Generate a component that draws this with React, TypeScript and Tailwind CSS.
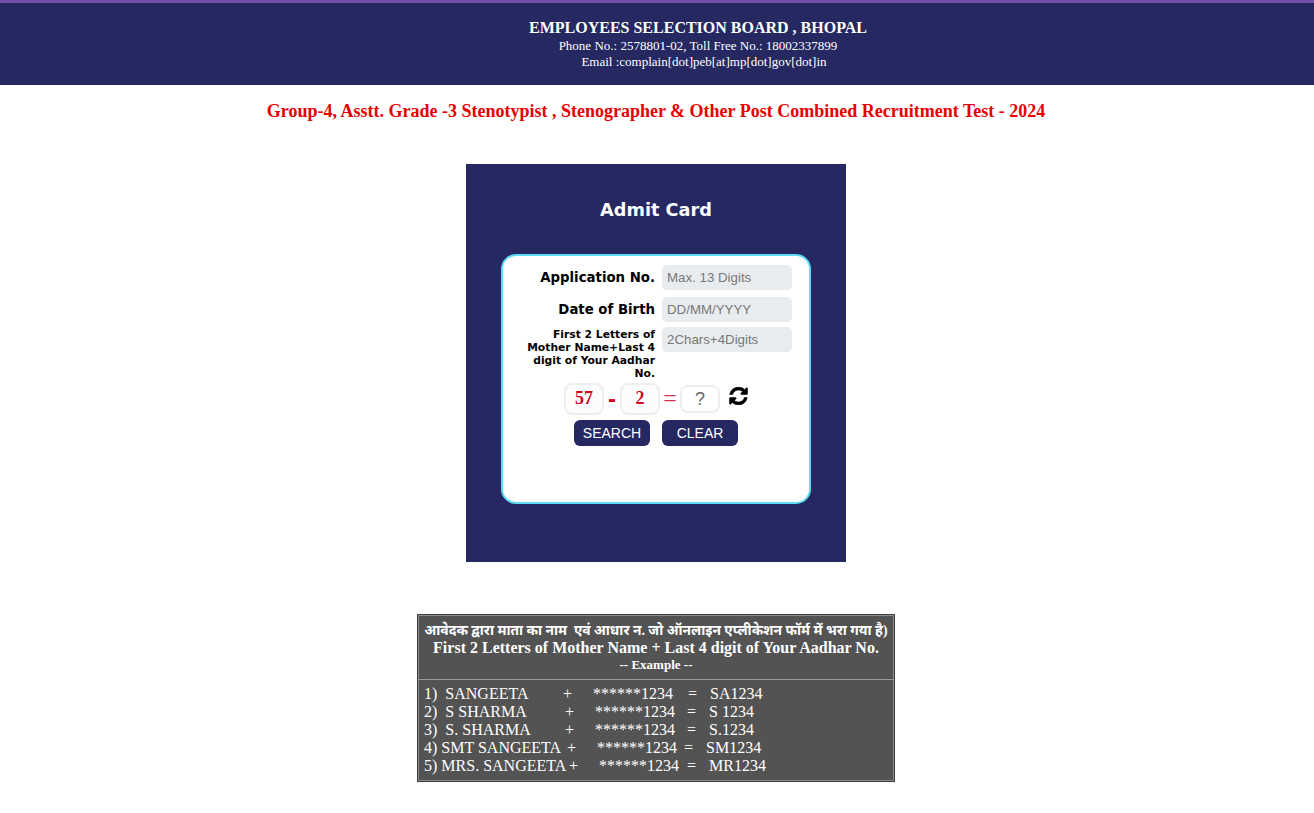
const serif = "font-['Liberation_Serif','Noto_Sans_Devanagari','Noto_Sans',serif]";
const verdana = "font-['DejaVu_Sans',sans-serif]";
const arial = "font-['Liberation_Sans',sans-serif]";

const examples = [
  { name: "1)  SANGEETA", plus: "w-[139px]", eq: "w-[24px]", result: "SA1234" },
  { name: "2)  S SHARMA", plus: "w-[141px]", eq: "w-[21px]", result: "S 1234" },
  { name: "3)  S. SHARMA", plus: "w-[141px]", eq: "w-[21px]", result: "S.1234" },
  { name: "4) SMT SANGEETA", plus: "w-[143px]", eq: "w-[16px]", result: "SM1234" },
  { name: "5) MRS. SANGEETA", plus: "w-[145px]", eq: "w-[17px]", result: "MR1234" },
];

function RefreshIcon() {
  return (
    <svg viewBox="128 128 1536 1536" stroke="currentColor" strokeWidth={50} className="mb-[7px] ml-[9px] h-[18px] w-[19px] fill-current text-black">
      <path d="M1639 1056q0 5-1 7-64 268-268 434.5t-478 166.5q-146 0-282.5-55t-243.5-157l-129 129q-19 19-45 19t-45-19-19-45v-448q0-26 19-45t45-19h448q26 0 45 19t19 45-19 45l-137 137q71 66 161 102t187 36q134 0 250-65t186-179q11-17 53-117 8-23 30-23h192q13 0 22.5 9.5t9.5 22.5zm25-800v448q0 26-19 45t-45 19h-448q-26 0-45-19t-19-45 19-45l138-138q-148-137-349-137-134 0-250 65t-186 179q-11 17-53 117-8 23-30 23h-199q-13 0-22.5-9.5t-9.5-22.5v-7q65-268 270-434.5t480-166.5q146 0 284 55.5t245 156.5l130-129q19-19 45-19t45 19 19 45z" />
    </svg>
  );
}

function Field({ label, placeholder, small }: { label: string; placeholder: string; small?: boolean }) {
  return (
    <div className="flex items-start">
      <label
        className={`flex w-[152px] justify-end pt-[1px] text-right font-bold text-black ${verdana} ${
          small ? "text-[10.75px] leading-[13px]" : "text-[13.3px] leading-[24px]"
        }`}
      >
        <span className={small ? "w-[130px]" : ""}>{label}</span>
      </label>
      <input
        readOnly
        placeholder={placeholder}
        className={`ml-[7px] h-[25px] w-[130px] rounded-[5px] bg-[#e9ecef] px-[5px] pb-[1px] text-[13.3px] outline-none placeholder:text-[#777] ${arial}`}
      />
    </div>
  );
}

function CaptchaBox({ children }: { children: React.ReactNode }) {
  return (
    <div
      className={`flex h-[32px] w-[40px] items-center justify-center rounded-[8px] border-2 border-[#eeeeee] bg-[#fcfcfc] pb-[1px] text-[18px] font-bold text-[#d0061f] ${serif}`}
    >
      {children}
    </div>
  );
}

export default function App() {
  return (
    <div className={`min-h-[813px] bg-white ${serif}`}>
      <header className="h-[85px] border-t-[3px] border-[#6f50a8] bg-[#252861] pt-[15px] text-center text-white">
        <div className="ml-[82px] text-[16px] font-bold leading-[20px]">EMPLOYEES SELECTION BOARD , BHOPAL</div>
        <div className="ml-[82px] text-[13px] leading-[15px]">Phone No.: 2578801-02, Toll Free No.: 18002337899</div>
        <div className="ml-[94px] text-[13px] leading-[17px]">Email :complain[dot]peb[at]mp[dot]gov[dot]in</div>
      </header>

      <div className="pr-[2px]">
        <h1 className="mt-[15px] text-center text-[18px] font-bold leading-[22px] text-[#e80000]">
          Group-4, Asstt. Grade -3 Stenotypist , Stenographer &amp; Other Post Combined Recruitment Test - 2024
        </h1>

        <section className="mx-auto mt-[42px] h-[398px] w-[380px] bg-[#252861] pt-[35px]">
          <h2 className={`text-center text-[17.7px] font-bold leading-[22px] text-white ${verdana}`}>Admit Card</h2>
          <div className="mx-auto mt-[33px] h-[250px] w-[310px] rounded-[15px] border-2 border-[#5fdcf5] bg-white pt-[9px]">
            <div className="flex flex-col">
              <Field label="Application No." placeholder="Max. 13 Digits" />
              <div className="mt-[7px]">
                <Field label="Date of Birth" placeholder="DD/MM/YYYY" />
              </div>
              <div className="mt-[5px]">
                <Field small label="First 2 Letters of Mother Name+Last 4 digit of Your Aadhar No." placeholder="2Chars+4Digits" />
              </div>
            </div>
            <div className="mt-[3px] ml-[61px] flex items-center">
              <CaptchaBox>57</CaptchaBox>
              <span className={`w-[16px] text-center text-[24px] font-bold leading-none text-[#d0061f] ${arial}`}>-</span>
              <CaptchaBox>2</CaptchaBox>
              <span className="mb-[3px] w-[20px] text-center text-[24px] leading-none text-[#d0304a]">=</span>
              <div className={`flex h-[28px] w-[40px] items-center justify-center rounded-[8px] border-2 border-[#eeeeee] text-[18px] text-[#666] ${arial}`}>
                ?
              </div>
              <RefreshIcon />
            </div>
            <div className={`mt-[5px] ml-[71px] flex gap-[12px] ${arial}`}>
              <button className="h-[26px] w-[76px] rounded-[6px] bg-[#252861] text-[14px] text-white">SEARCH</button>
              <button className="h-[26px] w-[76px] rounded-[6px] bg-[#252861] text-[14px] text-white">CLEAR</button>
            </div>
          </div>
        </section>

        <section className="mx-auto mt-[52px] h-[168px] w-[478px] border border-[#3c3c3c] bg-[#535353] text-white shadow-[inset_0_0_0_1px_#8c8c8c]">
          <div className="h-[65px] border-b border-[#9a9a9a] pt-[7px] text-center font-bold">
            <div className="whitespace-pre text-[13.8px] leading-[17px]">आवेदक द्वारा माता का नाम  एवं आधार न. जो ऑनलाइन एप्लीकेशन फॉर्म में भरा गया है)</div>
            <div className="text-[16px] leading-[18px]">First 2 Letters of Mother Name + Last 4 digit of Your Aadhar No.</div>
            <div className="text-[13px] leading-[16px]">-- Example --</div>
          </div>
          <div className="pl-[6px] pt-[5px] text-[16px] leading-[18px]">
            {examples.map((row) => (
              <div key={row.name} className="flex whitespace-pre">
                <span className={row.plus}>{row.name}</span>
                <span className="w-[30px]">+</span>
                <span>******1234</span>
                <span className={`${row.eq} text-right`}>=</span>
                <span className="ml-[13px]">{row.result}</span>
              </div>
            ))}
          </div>
        </section>
      </div>
    </div>
  );
}
